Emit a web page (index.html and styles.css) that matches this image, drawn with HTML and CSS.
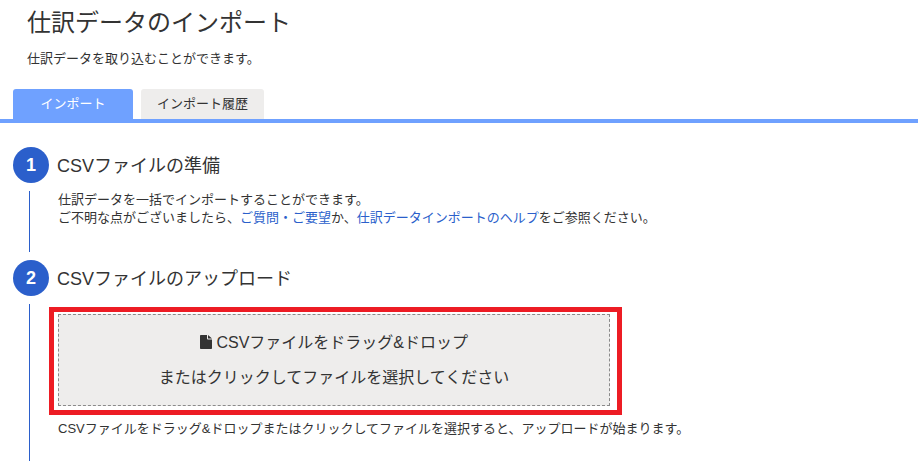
FILE: index.html
```
<!DOCTYPE html>
<html lang="ja">
<head>
<meta charset="utf-8">
<title>仕訳データのインポート</title>
<link rel="stylesheet" href="styles.css">
</head>
<body>
<header class="head">
  <h1 class="title">仕訳データのインポート</h1>
  <p class="lead">仕訳データを取り込むことができます。</p>
</header>
<nav class="tabs">
  <a class="tab tab-active">インポート</a>
  <a class="tab">インポート履歴</a>
</nav>
<main class="steps">
  <section class="step">
    <div class="step-head"><span class="num">1</span><h2 class="step-title">CSVファイルの準備</h2></div>
    <div class="step-body step-body-1">
      <p class="text">仕訳データを一括でインポートすることができます。<br>ご不明な点がございましたら、<a class="link">ご質問・ご要望</a>か、<a class="link">仕訳データインポートのヘルプ</a>をご参照ください。</p>
    </div>
  </section>
  <section class="step">
    <div class="step-head"><span class="num">2</span><h2 class="step-title">CSVファイルのアップロード</h2></div>
    <div class="step-body step-body-2">
      <div class="highlight">
        <div class="drop">
          <p class="drop-line"><svg class="file-icon" viewBox="0 0 12 14" aria-hidden="true"><path d="M0 .8C0 .4.3 0 .8 0H7v3.6c0 .5.4.9.9.9H12v8.7c0 .4-.3.8-.8.8H.8c-.5 0-.8-.4-.8-.8zM8 0l4 3.5H8z"/></svg> CSVファイルをドラッグ&amp;ドロップ</p>
          <p class="drop-line">またはクリックしてファイルを選択してください</p>
        </div>
      </div>
      <p class="text note">CSVファイルをドラッグ&amp;ドロップまたはクリックしてファイルを選択すると、アップロードが始まります。</p>
    </div>
  </section>
</main>
</body>
</html>
```
FILE: styles.css
```
* { box-sizing: border-box; }
html, body { margin: 0; padding: 0; }
body {
  background: #fff;
  color: #333;
  font-family: "Liberation Sans", "Noto Sans CJK JP", sans-serif;
  overflow: hidden;
  height: 461px;
}
p, h1, h2 { margin: 0; font-weight: 400; }
.head { padding: 8px 0 0 27px; }
.title { font-size: 24px; line-height: 30px; }
.lead { font-size: 13px; line-height: 18px; margin-top: 12px; }
.tabs {
  display: flex;
  gap: 8px;
  padding-left: 13px;
  margin-top: 21px;
  border-bottom: 4px solid #6fa1ff;
}
.tab {
  height: 30px;
  font-size: 13px;
  line-height: 29px;
  text-align: center;
  border-radius: 3px 3px 0 0;
  background: #eeedec;
  width: 123px;
}
.tab-active { width: 120px; background: #6fa1ff; color: #fff; }
.steps { padding: 24px 0 0 13px; }
.step-head { display: flex; align-items: center; height: 36px; gap: 8px; }
.num {
  width: 36px;
  height: 36px;
  border-radius: 50%;
  background: #2b5fcb;
  color: #fff;
  font-size: 18px;
  font-weight: 700;
  line-height: 36px;
  text-align: center;
}
.step-title { font-size: 18px; line-height: 24px; padding-top: 2px; }
.step-body { margin-left: 16px; border-left: 1px solid #2b5fcb; }
.step-body-1 { margin-top: 8px; height: 61px; margin-bottom: 8px; padding-left: 28px; }
.step-body-2 { margin-top: 8px; height: 160px; padding: 3px 0 0 19px; }
.text { font-size: 13px; line-height: 18px; }
.link { color: #2b5fcb; }
.highlight {
  width: 573px;
  height: 108px;
  border: 5px solid #ed1c24;
  padding: 2px 7px 4px 4px;
}
.drop {
  height: 92px;
  background: #eeedec;
  border: 1px dashed #8a8a8a;
  padding-top: 10px;
  text-align: center;
}
.drop-line { font-size: 16px; line-height: 35px; }
.file-icon { width: 12px; height: 14px; fill: #333; vertical-align: -1px; }
.note { margin: 5px 0 0 9px; }
```
